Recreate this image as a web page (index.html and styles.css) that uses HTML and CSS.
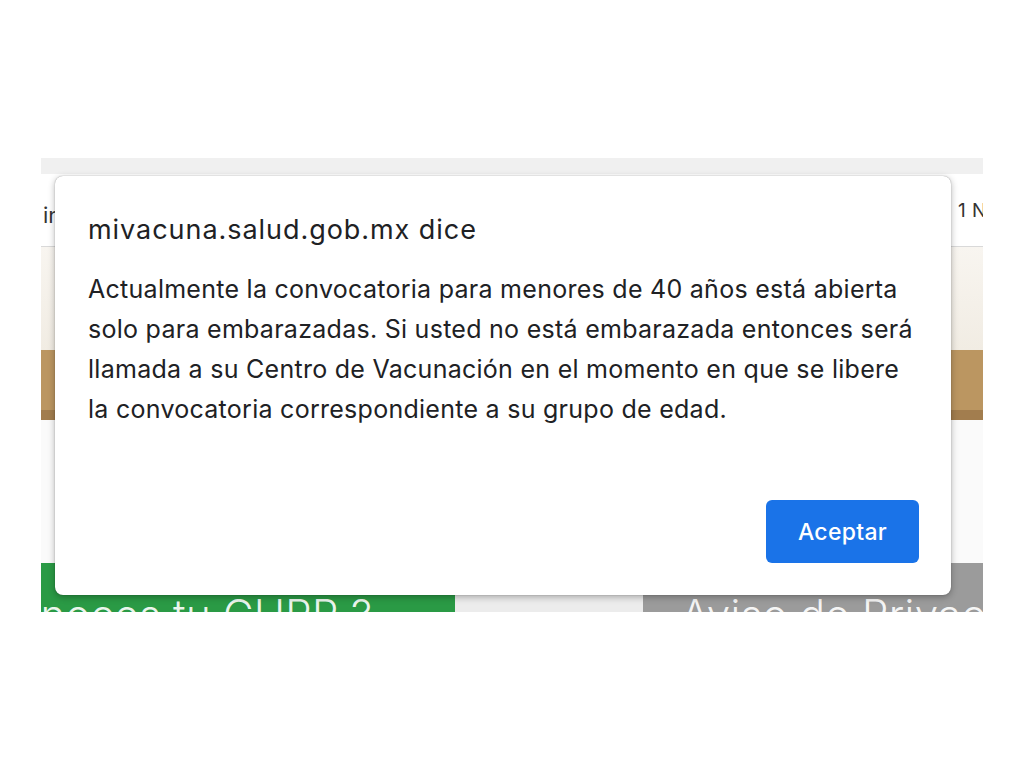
FILE: index.html
```html
<!DOCTYPE html>
<html lang="es">
<head>
<meta charset="UTF-8">
<meta name="viewport" content="width=device-width, initial-scale=1.0">
<title>Mi Vacuna</title>
<link rel="stylesheet" href="styles.css">
</head>
<body>

<div class="screen">
    <div class="site">
        <div class="topbar"></div>
        <nav class="nav">
            <span class="nav-left">in</span>
            <span class="nav-right">1 Nacional</span>
        </nav>
        <div class="hero"></div>
        <div class="stripe"></div>
        <div class="stripe-dark"></div>
        <div class="content"></div>
        <div class="links">
            <div class="link link-green"><span class="link-text curp">¿Conoces tu CURP ?</span></div>
            <div class="link link-blank"></div>
            <div class="link link-grey"><span class="link-text">Aviso de Privacidad</span></div>
        </div>
    </div>

    <div class="dialog">
        <h2 class="dialog-title">mivacuna.salud.gob.mx dice</h2>
        <p class="dialog-message">Actualmente la convocatoria para menores de 40 años está abierta solo para embarazadas. Si usted no está embarazada entonces será llamada a su Centro de Vacunación en el momento en que se libere la convocatoria correspondiente a su grupo de edad.</p>
        <button class="accept-button">Aceptar</button>
    </div>
</div>

</body>
</html>
```

FILE: styles.css
```css
body {
    margin: 0;
    background: #fff;
    font-family: Inter, "Noto Sans", sans-serif;
    color: #202124;
}

.screen {
    position: relative;
    height: 767px;
    overflow: hidden;
}

.site {
    margin: 158px 0 0 41px;
    width: 942px;
    height: 454px;
    overflow: hidden;
    background: #fafafa;
}

.topbar {
    height: 16px;
    background: #f0f0f0;
}

.nav {
    display: grid;
    grid-template-columns: 915px 1fr;
    height: 72px;
    background: #fff;
    border-bottom: 1px solid #d9d9d9;
    white-space: nowrap;
    overflow: hidden;
}

.nav-left {
    padding: 28px 0 0 2px;
    font-size: 22px;
    color: #333;
}

.nav-right {
    padding: 25px 0 0 2px;
    font-size: 19px;
    letter-spacing: 0.5px;
    color: #333;
    overflow: hidden;
}

.hero {
    height: 103px;
    background: linear-gradient(#f8f5f0, #f1ece3);
}

.stripe {
    height: 60px;
    background: #bb9661;
}

.stripe-dark {
    height: 10px;
    background: #a27d4e;
}

.content {
    height: 143px;
    background: #fafafa;
}

.links {
    display: grid;
    grid-template-columns: 414px 188px 1fr;
    height: 49px;
}

.link {
    overflow: hidden;
    white-space: nowrap;
    padding-top: 31px;
}

.link-green {
    background: #2a9a45;
}

.link-blank {
    background: #ececec;
}

.link-grey {
    background: #9b9b9b;
    padding-left: 38px;
}

.link-text {
    display: block;
    font-size: 42px;
    font-weight: 300;
    line-height: 42px;
    letter-spacing: 0.3px;
    color: rgba(255, 255, 255, 0.92);
}

.curp {
    margin-left: -78px;
}

.dialog {
    position: absolute;
    left: 55px;
    top: 176px;
    width: 896px;
    height: 419px;
    box-sizing: border-box;
    padding: 37px 32px 32px 33px;
    display: flex;
    flex-direction: column;
    background: #fff;
    border-radius: 8px;
    box-shadow: 0 0 1px rgba(0, 0, 0, 0.45), 0 2px 7px rgba(0, 0, 0, 0.3);
}

.dialog-title {
    margin: 0;
    font-size: 27px;
    font-weight: 400;
    line-height: 33px;
    letter-spacing: 0.95px;
}

.dialog-message {
    margin: 23px 0 0;
    font-size: 25px;
    line-height: 40px;
    letter-spacing: 0.27px;
}

.accept-button {
    margin-top: auto;
    align-self: flex-end;
    width: 153px;
    height: 63px;
    border: none;
    border-radius: 6px;
    background: #1a73e8;
    color: #fff;
    font-family: Inter, "Noto Sans", sans-serif;
    font-size: 23px;
    font-weight: 500;
    letter-spacing: 0.3px;
    cursor: pointer;
}
```
